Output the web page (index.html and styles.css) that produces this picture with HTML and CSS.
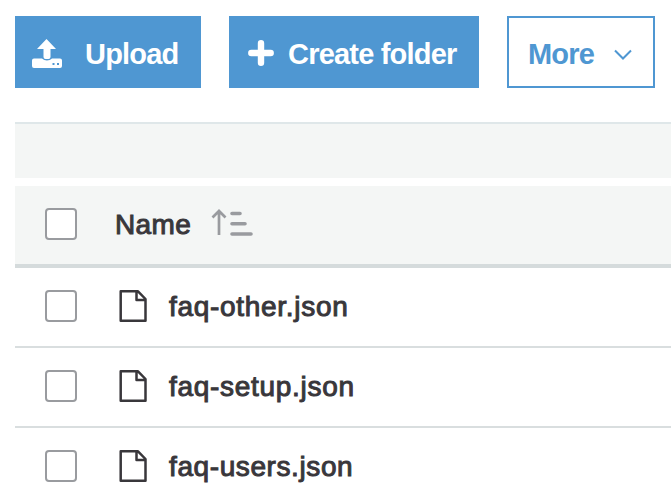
FILE: index.html
```html
<!DOCTYPE html>
<html lang="en">
<head>
<meta charset="utf-8">
<title>Files</title>
<link rel="stylesheet" href="styles.css">
</head>
<body>
<svg class="defs" width="0" height="0">
  <symbol id="file" viewBox="0 0 28 34">
    <path d="M1.700 2.300h17.300l7.500 7.700v21.700H1.700z M17.500 2.300v8.700h9" fill="none" stroke="currentColor" stroke-width="2.500" stroke-linejoin="round"/>
  </symbol>
</svg>
<div class="toolbar">
  <button class="btn upload">
    <svg width="30" height="30" viewBox="0 0 30 30" fill="currentColor">
      <path d="M14.500 0l9.500 10h-5.500v8q0 2-2 2h-3q-2 0-2-2v-8H5z"/>
      <path fill-rule="evenodd" d="M2 19.500h8q2 2 5 2t5-2h8q2 0 2 2v5.500q0 2-2 2H2q-2 0-2-2v-5.500q0-2 2-2zM20.500 24v2h2v-2zM25 24v2h2v-2z"/>
    </svg>
    <span class="label">Upload</span>
  </button>
  <button class="btn create">
    <svg width="26" height="26" viewBox="0 0 26 26">
      <path d="M13 3.300v19.400M3.300 13h19.400" stroke="currentColor" stroke-width="6.400" stroke-linecap="round"/>
    </svg>
    <span class="label">Create folder</span>
  </button>
  <button class="btn more">
    <span class="label">More</span>
    <svg class="chevron" width="18" height="12" viewBox="0 0 18 12">
      <path d="M1 1.500l8 8 8-8" fill="none" stroke="currentColor" stroke-width="2"/>
    </svg>
  </button>
</div>
<div class="strip"></div>
<div class="table">
  <div class="row head">
    <span class="check"></span>
    <span class="name">Name</span>
    <svg class="sort" width="42" height="28" viewBox="0 0 42 28" fill="none" stroke="currentColor">
      <path d="M8 26V3M1.500 8.500L8 2l6.500 6.500" stroke-width="2.700"/>
      <path d="M21 4.500h8M21 14.700h13M21 25h19" stroke-width="3.600" stroke-linecap="round"/>
    </svg>
  </div>
  <div class="row">
    <span class="check"></span>
    <svg class="file" width="28" height="34"><use href="#file"/></svg>
    <span class="name">faq-other.json</span>
  </div>
  <div class="row">
    <span class="check"></span>
    <svg class="file" width="28" height="34"><use href="#file"/></svg>
    <span class="name">faq-setup.json</span>
  </div>
  <div class="row">
    <span class="check"></span>
    <svg class="file" width="28" height="34"><use href="#file"/></svg>
    <span class="name users">faq-users.json</span>
  </div>
</div>
</body>
</html>
```
FILE: styles.css
```css
* { box-sizing: border-box; }
body {
  margin: 0;
  padding: 16px 0 0 15px;
  height: 499px;
  overflow: hidden;
  background: #fff;
  color: #39373b;
  font: 28px/36px "Liberation Sans", Arial, sans-serif;
}
svg { display: block; flex: none; }
.defs { position: absolute; }
.toolbar { display: flex; gap: 28px; height: 72px; }
.btn {
  display: flex;
  align-items: center;
  height: 72px;
  border: 0;
  border-radius: 0;
  background: #4f97d2;
  color: #fff;
  font: bold 29px/36px "Liberation Sans", Arial, sans-serif;
  letter-spacing: -.8px;
  white-space: nowrap;
}
.label { padding-top: 2px; }
.upload { width: 186px; padding: 3px 0 0 17px; gap: 23px; }
.upload .label { padding-top: 0; }
.create { width: 250px; padding: 2px 0 0 19px; gap: 14px; }
.more {
  width: 148px;
  padding: 2px 0 0 19px;
  gap: 20px;
  border: 2px solid #4f97d2;
  background: #fff;
  color: #4f97d2;
}
.chevron { margin-top: 4px; }
.strip {
  height: 56px;
  margin: 34px 0 8px;
  border-top: 2px solid #dfe7e9;
  background: #f4f6f5;
}
.row {
  display: flex;
  align-items: center;
  height: 80px;
  padding: 0 0 2px 30px;
  border-bottom: 2px solid #d9dedf;
}
.head {
  height: 82px;
  border-bottom: 4px solid #d5dbdc;
  background: #f4f6f5;
}
.check {
  width: 32px;
  height: 32px;
  border: 2px solid #999b9f;
  border-radius: 4px;
  background: #fff;
}
.name { padding-top: 2px; letter-spacing: .7px; -webkit-text-stroke: 1px currentColor; }
.head .name { margin-left: 38px; padding-top: 1px; letter-spacing: .4px; }
.users { letter-spacing: .6px; }
.sort { margin: -2px 0 0 20px; color: #999b9f; }
.file { margin: 0 22px 0 42px; }
```
